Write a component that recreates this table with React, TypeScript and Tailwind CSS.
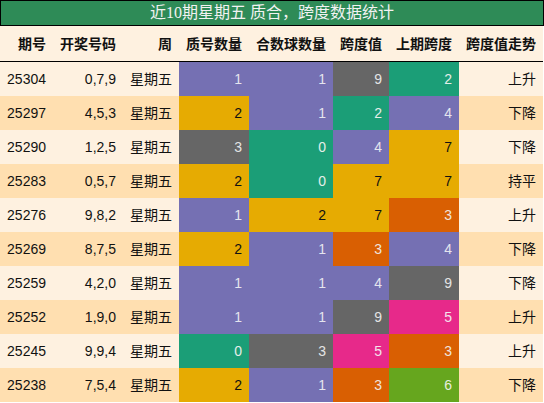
const PURPLE = 'bg-[#7570b3] text-[#e4e4ee]';
const GOLD = 'bg-[#e6ab02] text-[#111111]';
const GRAY = 'bg-[#666666] text-[#e4e4e4]';
const TEAL = 'bg-[#1b9e77] text-[#e4eee9]';
const ORANGE = 'bg-[#d95f02] text-[#f0e4dc]';
const PINK = 'bg-[#e7298a] text-[#f4e2ec]';
const GREEN = 'bg-[#66a61e] text-[#e8eee0]';

type Cell = [number, string];

interface Row {
  issue: string;
  nums: string;
  week: string;
  prime: Cell;
  composite: Cell;
  span: Cell;
  lastSpan: Cell;
  trend: string;
}

const rows: Row[] = [
  {issue: '25304', nums: '0,7,9', week: '星期五', prime: [1, PURPLE], composite: [1, PURPLE], span: [9, GRAY], lastSpan: [2, TEAL], trend: '上升'},
  {issue: '25297', nums: '4,5,3', week: '星期五', prime: [2, GOLD], composite: [1, PURPLE], span: [2, TEAL], lastSpan: [4, PURPLE], trend: '下降'},
  {issue: '25290', nums: '1,2,5', week: '星期五', prime: [3, GRAY], composite: [0, TEAL], span: [4, PURPLE], lastSpan: [7, GOLD], trend: '下降'},
  {issue: '25283', nums: '0,5,7', week: '星期五', prime: [2, GOLD], composite: [0, TEAL], span: [7, GOLD], lastSpan: [7, GOLD], trend: '持平'},
  {issue: '25276', nums: '9,8,2', week: '星期五', prime: [1, PURPLE], composite: [2, GOLD], span: [7, GOLD], lastSpan: [3, ORANGE], trend: '上升'},
  {issue: '25269', nums: '8,7,5', week: '星期五', prime: [2, GOLD], composite: [1, PURPLE], span: [3, ORANGE], lastSpan: [4, PURPLE], trend: '下降'},
  {issue: '25259', nums: '4,2,0', week: '星期五', prime: [1, PURPLE], composite: [1, PURPLE], span: [4, PURPLE], lastSpan: [9, GRAY], trend: '下降'},
  {issue: '25252', nums: '1,9,0', week: '星期五', prime: [1, PURPLE], composite: [1, PURPLE], span: [9, GRAY], lastSpan: [5, PINK], trend: '上升'},
  {issue: '25245', nums: '9,9,4', week: '星期五', prime: [0, TEAL], composite: [3, GRAY], span: [5, PINK], lastSpan: [3, ORANGE], trend: '上升'},
  {issue: '25238', nums: '7,5,4', week: '星期五', prime: [2, GOLD], composite: [1, PURPLE], span: [3, ORANGE], lastSpan: [6, GREEN], trend: '下降'},
];

const headers = ['期号', '开奖号码', '周', '质号数量', '合数球数量', '跨度值', '上期跨度', '跨度值走势'];

const GRID = 'grid grid-cols-[53px_70px_56px_70px_84px_56px_70px_84px]';

export default function App() {
  return (
    <div className="w-[544px] h-[403px] bg-white text-[14px] text-[#111111] font-['Liberation_Sans','Noto_Sans_CJK_SC',sans-serif]">
      {/* Title */}
      <div className="h-[26px] w-[544px] border border-black bg-[#2e8b57] flex items-center justify-center text-[16px] text-[#f2f2f2] font-['Liberation_Serif','Noto_Sans_CJK_SC',serif]">
        近10期星期五 质合，跨度数据统计
      </div>

      <div className="w-[543px]">
        {/* Header */}
        <div className={`${GRID} h-[36px] bg-[#fef1e0] border-b border-black font-bold`}>
          {headers.map((h) => (
            <div
              key={h}
              className="flex items-center justify-end pr-[7px] whitespace-nowrap font-['Noto_Sans_CJK_SC',sans-serif]"
            >
              {h}
            </div>
          ))}
        </div>

        {/* Body */}
        {rows.map((r, i) => (
          <div
            key={r.issue}
            className={`${GRID} h-[34px] ${i % 2 === 0 ? 'bg-[#fef1e0]' : 'bg-[#ffdfb0]'}`}
          >
            <div className="flex items-center justify-end pr-[7px]">{r.issue}</div>
            <div className="flex items-center justify-end pr-[7px]">{r.nums}</div>
            <div className="flex items-center justify-end pr-[7px]">{r.week}</div>
            {[r.prime, r.composite, r.span, r.lastSpan].map(([v, cls], j) => (
              <div key={j} className={`flex items-center justify-end pr-[7px] ${cls}`}>
                {v}
              </div>
            ))}
            <div className="flex items-center justify-end pr-[7px]">{r.trend}</div>
          </div>
        ))}
      </div>
    </div>
  );
}
